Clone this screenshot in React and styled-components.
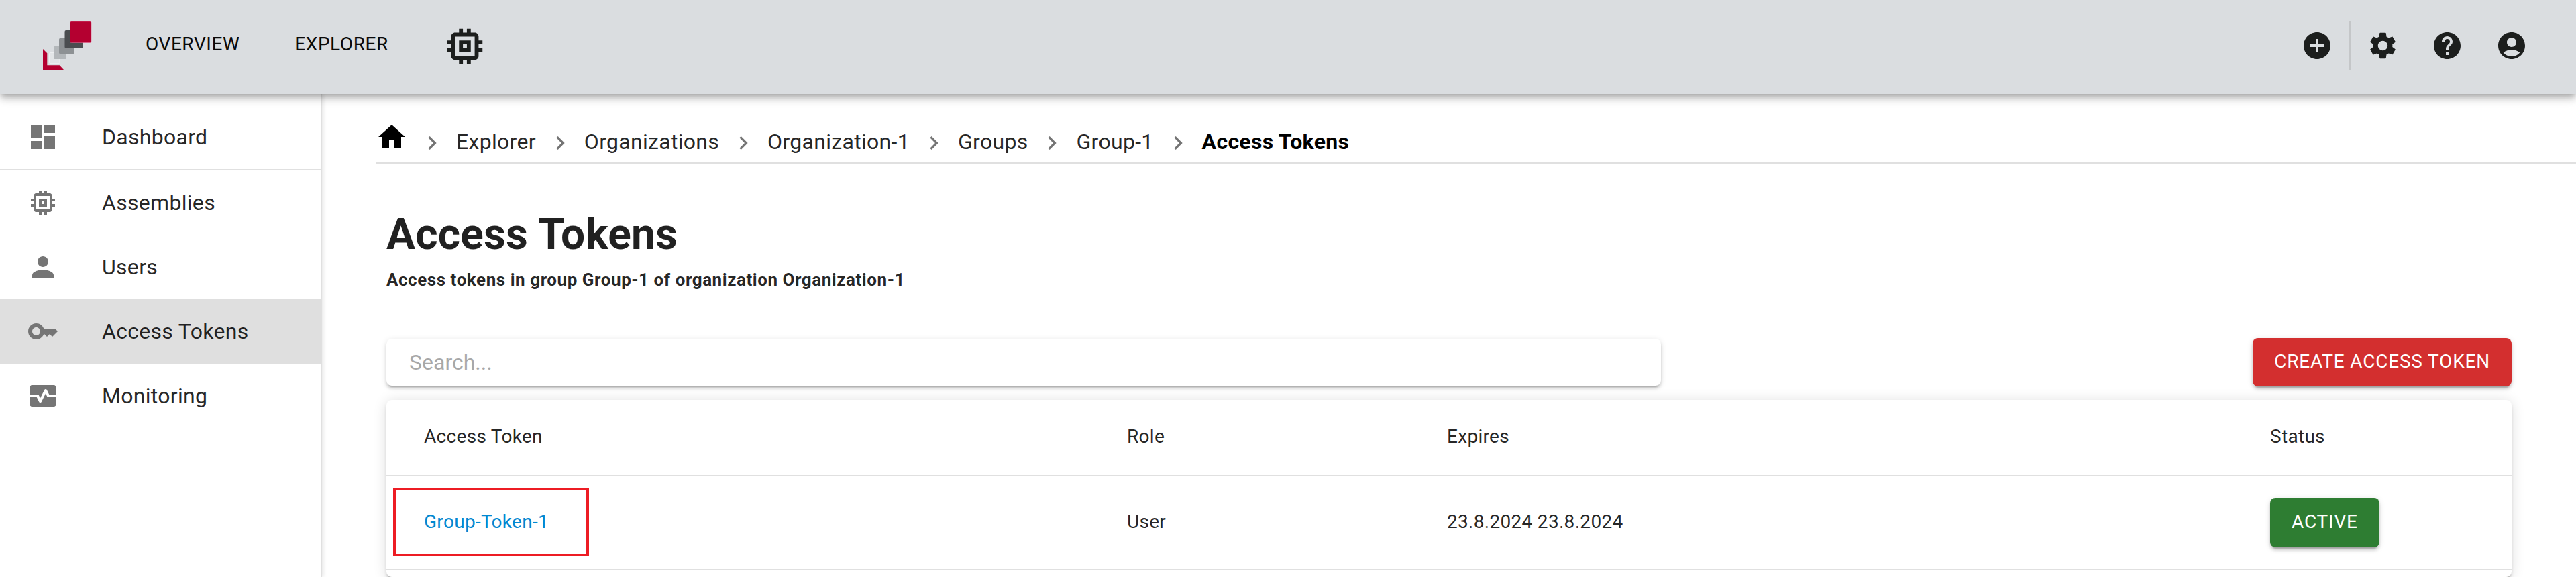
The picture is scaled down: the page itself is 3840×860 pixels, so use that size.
import React from "react";
import styled, { createGlobalStyle } from "styled-components";

const P = {
  memory: "M15 9H9v6h6V9zm-2 4h-2v-2h2v2zm8-2V9h-2V7c0-1.1-.9-2-2-2h-2V3h-2v2h-2V3H9v2H7c-1.1 0-2 .9-2 2v2H3v2h2v2H3v2h2v2c0 1.1.9 2 2 2h2v2h2v-2h2v2h2v-2h2c1.1 0 2-.9 2-2v-2h2v-2h-2v-2h2zm-4 6H7V7h10v10z",
  dashboard: "M3 13h8V3H3v10zm0 8h8v-6H3v6zm10 0h8V11h-8v10zm0-18v6h8V3h-8z",
  person: "M12 12c2.21 0 4-1.79 4-4s-1.79-4-4-4-4 1.79-4 4 1.79 4 4 4zm0 2c-2.67 0-8 1.34-8 4v2h16v-2c0-2.66-5.33-4-8-4z",
  key: "M21 10h-8.35C11.83 7.67 9.61 6 7 6c-3.31 0-6 2.69-6 6s2.69 6 6 6c2.61 0 4.83-1.67 5.65-4H13l2 2 2-2 2 2 4-4.04L21 10zM7 15c-1.65 0-3-1.35-3-3s1.35-3 3-3 3 1.35 3 3-1.35 3-3 3z",
  monitor: "M15.11 12.45 14 10.24l-3.11 6.21c-.16.34-.51.55-.89.55s-.73-.21-.89-.55L7.38 13H2v5c0 1.1.9 2 2 2h16c1.1 0 2-.9 2-2v-5h-6c-.38 0-.73-.21-.89-.55zM20 4H4c-1.1 0-2 .9-2 2v5h6c.38 0 .73.21.89.55L10 13.76l3.11-6.21c.34-.68 1.45-.68 1.79 0L16.62 11H22V6c0-1.1-.9-2-2-2z",
  add: "M12 2C6.48 2 2 6.48 2 12s4.48 10 10 10 10-4.48 10-10S17.52 2 12 2zm5 11h-4v4h-2v-4H7v-2h4V7h2v4h4v2z",
  gear: "M19.14 12.94c.04-.3.06-.61.06-.94 0-.32-.02-.64-.07-.94l2.03-1.58c.18-.14.23-.41.12-.61l-1.92-3.32c-.12-.22-.37-.29-.59-.22l-2.39.96c-.5-.38-1.03-.7-1.62-.94l-.36-2.54c-.04-.24-.24-.41-.48-.41h-3.84c-.24 0-.43.17-.47.41l-.36 2.54c-.59.24-1.13.57-1.62.94l-2.39-.96c-.22-.08-.47 0-.59.22L2.74 8.87c-.12.21-.08.47.12.61l2.03 1.58c-.05.3-.09.63-.09.94s.02.64.07.94l-2.03 1.58c-.18.14-.23.41-.12.61l1.92 3.32c.12.22.37.29.59.22l2.39-.96c.5.38 1.03.7 1.62.94l.36 2.54c.05.24.24.41.48.41h3.84c.24 0 .44-.17.47-.41l.36-2.54c.59-.24 1.13-.56 1.62-.94l2.39.96c.22.08.47 0 .59-.22l1.92-3.32c.12-.22.07-.47-.12-.61l-2.01-1.58zM12 15.6c-1.98 0-3.6-1.62-3.6-3.6s1.62-3.6 3.6-3.6 3.6 1.62 3.6 3.6-1.62 3.6-3.6 3.6z",
  help: "M12 2C6.48 2 2 6.48 2 12s4.48 10 10 10 10-4.48 10-10S17.52 2 12 2zm1 17h-2v-2h2v2zm2.07-7.75-.9.92C13.45 12.9 13 13.5 13 15h-2v-.5c0-1.1.45-2.1 1.17-2.83l1.24-1.26c.37-.36.59-.86.59-1.41 0-1.1-.9-2-2-2s-2 .9-2 2H8c0-2.21 1.79-4 4-4s4 1.79 4 4c0 .88-.36 1.68-.93 2.25z",
  account: "M12 2C6.48 2 2 6.48 2 12s4.48 10 10 10 10-4.48 10-10S17.52 2 12 2zm0 4c1.93 0 3.5 1.57 3.5 3.5S13.93 13 12 13s-3.5-1.57-3.5-3.5S10.07 6 12 6zm0 14c-2.03 0-4.43-.82-6.14-2.88C7.55 15.8 9.68 15 12 15s4.45.8 6.14 2.12C16.43 19.18 14.03 20 12 20z",
  home: "M10 20v-6h4v6h5v-8h3L12 3 2 12h3v8z",
  next: "M10 6 8.59 7.41 13.17 12l-4.58 4.59L10 18l6-6z",
};

const Global = createGlobalStyle`
  html, body { margin: 0; padding: 0; background: #fff; }
  body { font-family: Roboto, "Liberation Sans", sans-serif; color: rgba(0,0,0,.87); overflow: hidden; }
  * { box-sizing: border-box; }
`;

const Page = styled.div`display: flex; flex-direction: column; height: 860px; overflow: hidden;`;

const Header = styled.header`
  position: relative; z-index: 2; flex: none; height: 140px;
  display: flex; align-items: center; padding: 0 48px 0 60px; background: #dadde0;
  box-shadow: 0 4px 8px -2px rgba(0,0,0,.2), 0 8px 10px rgba(0,0,0,.14), 0 2px 20px rgba(0,0,0,.12);
`;
const LogoMark = styled.svg`display: block; flex: none; width: 80px; height: 80px; margin-right: 77px; margin-top: -4px;`;
const NavLink = styled.a`
  font-size: 28px; line-height: 40px; letter-spacing: .55px; color: #0a0a0a;
  margin-right: 82px; margin-top: -8px;
`;
const ChipIcon = styled.svg`display: block; width: 70px; height: 70px; fill: #1c1e1d; margin-left: -3px; margin-top: -2px;`;
const HeaderRight = styled.div`display: flex; align-items: center; margin-left: auto;`;
const ActionIcon = styled.span`
  width: 96px; height: 48px; display: flex; justify-content: center; margin-top: -4px;
  svg { display: block; width: 48px; height: 48px; fill: #1c1e1d; }
`;
const VDivider = styled.span`width: 2px; height: 74px; background: #c4c6c8; margin-top: -4px;`;

const Body = styled.div`flex: 1; display: flex; min-height: 0;`;

const Sidebar = styled.nav`
  flex: none; width: 480px; padding-top: 16px; background: #fff;
  border-right: 2px solid #e0e0e0; box-shadow: 2px 0 6px rgba(0,0,0,.10);
`;
const NavItem = styled.div`
  display: flex; align-items: center; height: ${p => (p.$divider ? 98 : 96)}px; padding-left: 40px;
  font-size: 32px; letter-spacing: .3px; color: rgba(0,0,0,.87);
  background: ${p => (p.$active ? "#dfdfdf" : "transparent")};
  border-bottom: ${p => (p.$divider ? "2px solid #e0e0e0" : "none")};
`;
const NavIcon = styled.svg`display: block; flex: none; width: 48px; height: 48px; margin-right: 64px; fill: #757575;`;

const Main = styled.main`flex: 1; display: flex; flex-direction: column; min-width: 0; padding: 40px 0 0 80px;`;

const Crumbs = styled.div`
  flex: none; height: 64px; display: flex; align-items: flex-start;
  border-bottom: 2px solid #e0e0e0;
`;
const HomeIcon = styled.svg`display: block; flex: none; width: 48px; height: 48px; fill: #000;`;
const CrumbSep = styled.svg`display: block; flex: none; width: 40px; height: 40px; margin: 13px 16px 0; fill: #757575;`;
const Crumb = styled.span`
  font-size: 32px; line-height: 48px; margin-top: 7px; letter-spacing: .3px; color: rgba(0,0,0,.87);
  font-weight: ${p => (p.$current ? 700 : 400)};
  ${p => p.$current && "color: #000;"}
`;

const Content = styled.div`flex: 1; display: flex; flex-direction: column; min-height: 0; padding: 0 96px 0 16px;`;
const Title = styled.h1`margin: 68px 0 0; font-size: 64px; line-height: 76px; font-weight: 700; letter-spacing: .2px; color: rgba(0,0,0,.87);`;
const Subtitle = styled.p`margin: 7px 0 0; font-size: 26px; line-height: 44px; letter-spacing: .55px; font-weight: 700; color: rgba(0,0,0,.87);`;

const Toolbar = styled.div`flex: none; display: flex; align-items: center; justify-content: space-between; height: 72px; margin-top: 65px;`;
const Search = styled.input`
  width: 1900px; height: 70px; padding: 0 34px; border: 0; border-radius: 8px; outline: none;
  font: 400 32px Roboto, sans-serif; color: rgba(0,0,0,.87); background: #fff;
  box-shadow: 0 6px 2px -4px rgba(0,0,0,.2), 0 4px 4px rgba(0,0,0,.14), 0 2px 10px rgba(0,0,0,.12);
  &::placeholder { color: #a8a8a8; opacity: 1; }
`;
const ActionButton = styled.button`
  border: 0; border-radius: 8px; padding: 0 32px 4px; height: ${p => p.$h}px; color: #fff;
  background: ${p => p.$bg};
  font: 400 28px Roboto, sans-serif; letter-spacing: .8px; text-transform: uppercase;
  box-shadow: 0 6px 2px -4px rgba(0,0,0,.2), 0 4px 4px rgba(0,0,0,.14), 0 2px 10px rgba(0,0,0,.12);
`;

const Card = styled.section`
  flex: 1; margin-top: 20px; border-radius: 8px; background: #fff;
  box-shadow: 0 4px 2px -2px rgba(0,0,0,.2), 0 4px 4px rgba(0,0,0,.14), 0 2px 20px rgba(0,0,0,.14);
`;
const Row = styled.div`
  display: grid; grid-template-columns: 1104px 477px 1227px 360px; align-items: center;
  height: ${p => p.$h}px; border-bottom: 2px solid #e0e0e0; font-size: 28px; letter-spacing: .3px; color: rgba(0,0,0,.87);
`;
const Cell = styled.div`padding-bottom: 4px;`;
const FirstCell = styled(Cell)`padding-left: 56px;`;
const Highlight = styled.div`
  display: flex; align-items: center; width: 292px; height: 102px; margin-left: 10px; margin-top: -2px;
  padding: 0 0 2px 42px; border: 4px solid #ed1c24;
`;
const TokenLink = styled.a`color: #0288d1;`;

const logoColor = { red: "#b40030", dark: "#4a4d50", mid: "#8d9194", light: "#b3b7ba", pale: "#e2e5e7" };

function Logo() {
  return (
    <LogoMark viewBox="60 28 80 80">
      <polygon points="64,73 64,104 95,104 88.7,97.3 70.3,97.3 70.3,79.3" fill={logoColor.red} />
      <rect x="73.5" y="78.5" width="15.5" height="16" rx="1" fill={logoColor.pale} stroke="#eceef0" />
      <rect x="80" y="69" width="19" height="19" rx="1.5" fill={logoColor.light} />
      <rect x="88" y="57" width="23" height="23" rx="1.5" fill={logoColor.mid} />
      <rect x="96.5" y="45" width="27" height="27" rx="2" fill={logoColor.dark} />
      <rect x="104.5" y="32" width="31.5" height="31.5" rx="2" fill={logoColor.red} stroke="#e0608a" strokeWidth=".6" />
    </LogoMark>
  );
}

const Path = ({ as: Comp, d }) => (
  <Comp viewBox="0 0 24 24"><path d={d} /></Comp>
);

const items = [
  ["Dashboard", P.dashboard, { $divider: true }],
  ["Assemblies", P.memory, {}],
  ["Users", P.person, {}],
  ["Access Tokens", P.key, { $active: true }],
  ["Monitoring", P.monitor, {}],
];
const crumbs = ["Explorer", "Organizations", "Organization-1", "Groups", "Group-1"];

export default function App() {
  return (
    <Page>
      <Global />
      <Header>
        <Logo />
        <NavLink>OVERVIEW</NavLink>
        <NavLink>EXPLORER</NavLink>
        <Path as={ChipIcon} d={P.memory} />
        <HeaderRight>
          <ActionIcon><svg viewBox="0 0 24 24"><path d={P.add} /></svg></ActionIcon>
          <VDivider />
          <ActionIcon><svg viewBox="0 0 24 24"><path d={P.gear} /></svg></ActionIcon>
          <ActionIcon><svg viewBox="0 0 24 24"><path d={P.help} /></svg></ActionIcon>
          <ActionIcon><svg viewBox="0 0 24 24"><path d={P.account} /></svg></ActionIcon>
        </HeaderRight>
      </Header>
      <Body>
        <Sidebar>
          {items.map(([label, d, props]) => (
            <NavItem key={label} {...props}>
              <Path as={NavIcon} d={d} />
              {label}
            </NavItem>
          ))}
        </Sidebar>
        <Main>
          <Crumbs>
            <Path as={HomeIcon} d={P.home} />
            {crumbs.map(c => (
              <React.Fragment key={c}>
                <Path as={CrumbSep} d={P.next} />
                <Crumb>{c}</Crumb>
              </React.Fragment>
            ))}
            <Path as={CrumbSep} d={P.next} />
            <Crumb $current>Access Tokens</Crumb>
          </Crumbs>
          <Content>
            <Title>Access Tokens</Title>
            <Subtitle>Access tokens in group Group-1 of organization Organization-1</Subtitle>
            <Toolbar>
              <Search placeholder="Search..." />
              <ActionButton $h={72} $bg="#d32f2f">Create Access Token</ActionButton>
            </Toolbar>
            <Card>
              <Row $h={114}>
                <FirstCell>Access Token</FirstCell>
                <Cell>Role</Cell>
                <Cell>Expires</Cell>
                <Cell>Status</Cell>
              </Row>
              <Row $h={140}>
                <Highlight><TokenLink>Group-Token-1</TokenLink></Highlight>
                <Cell>User</Cell>
                <Cell>23.8.2024 23.8.2024</Cell>
                <div><ActionButton $h={74} $bg="#2e7d32">Active</ActionButton></div>
              </Row>
            </Card>
          </Content>
        </Main>
      </Body>
    </Page>
  );
}
